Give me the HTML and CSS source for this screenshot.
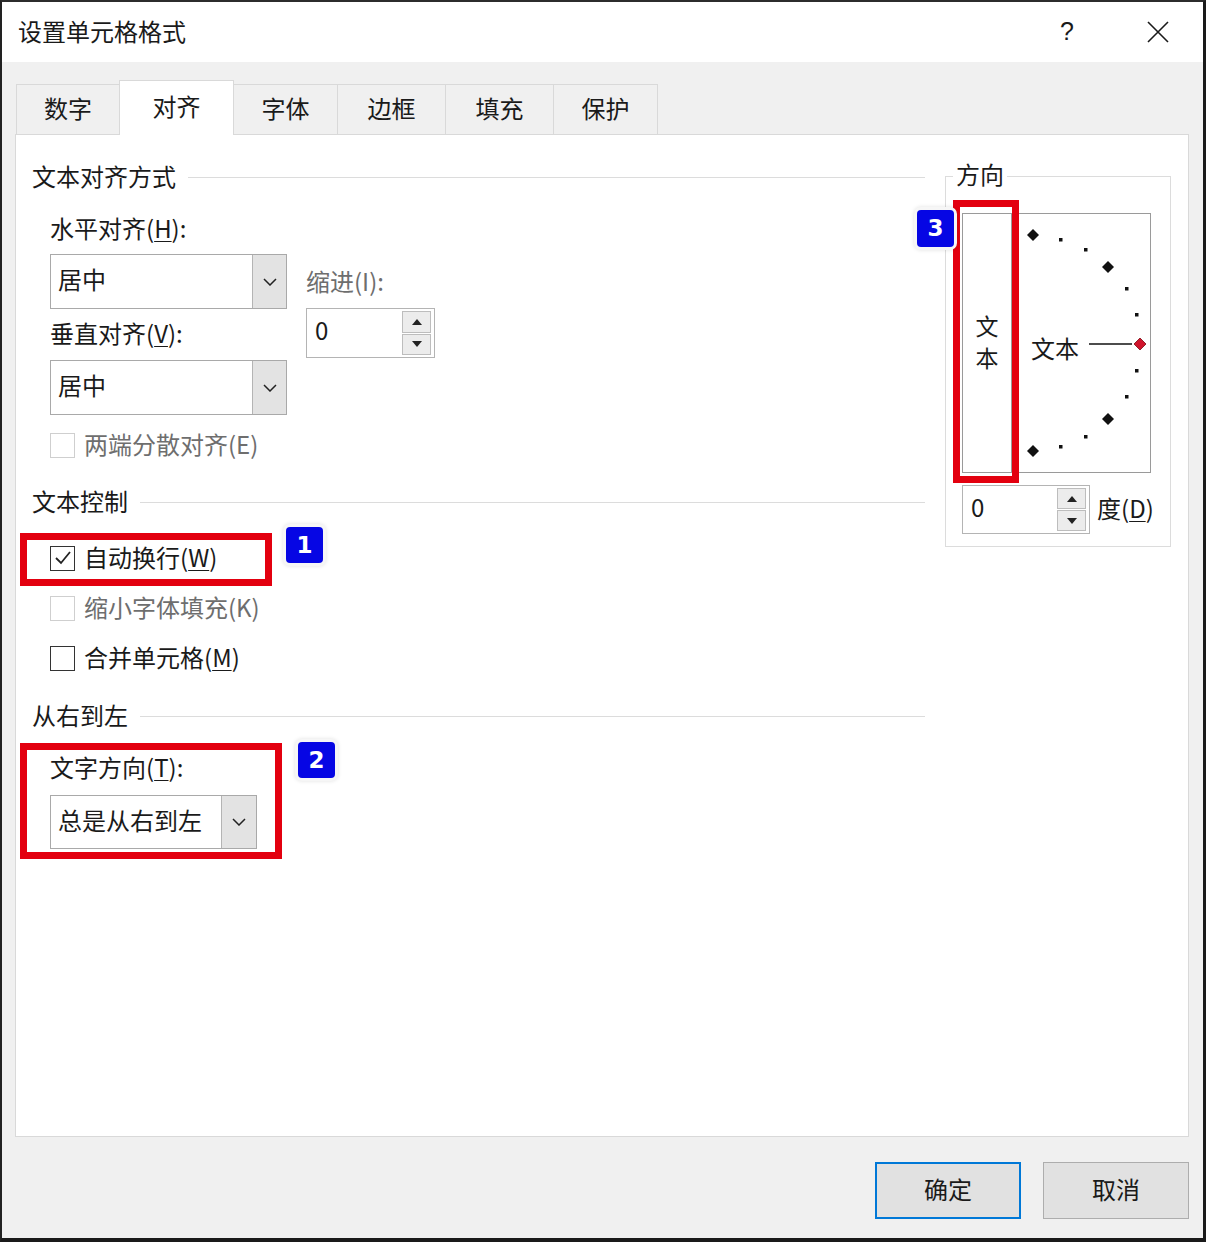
FILE: index.html
```html
<!DOCTYPE html>
<html lang="zh-CN">
<head>
  <meta charset="UTF-8">
  <meta name="viewport" content="width=device-width, initial-scale=1.0">
  <title>设置单元格格式</title>
  <link rel="stylesheet" href="styles.css">
</head>
<body>
  <div class="dialog">
    <div class="titlebar">
      <span class="title">设置单元格格式</span>
      <span class="help">?</span>
      <svg class="close" width="22" height="22" viewBox="0 0 22 22">
        <path d="M1 1 L21 21 M21 1 L1 21" stroke="#1a1a1a" stroke-width="1.6" fill="none"/>
      </svg>
    </div>

    <div class="content">
      <div class="tabs">
        <div class="tab">数字</div>
        <div class="tab active">对齐</div>
        <div class="tab">字体</div>
        <div class="tab">边框</div>
        <div class="tab">填充</div>
        <div class="tab">保护</div>
      </div>

      <div class="panel">
        <div class="left">
          <div class="sec-title"><span>文本对齐方式</span><i class="rule"></i></div>
          <div class="sec-body">
            <div class="align-row">
              <div class="align-col">
                <div class="label">水平对齐(<u>H</u>):</div>
                <div class="select">
                  <span class="select-text">居中</span>
                  <span class="drop"><svg width="14" height="8" viewBox="0 0 14 8"><path d="M1 1 L7 7 L13 1" stroke="#222" stroke-width="1.5" fill="none"/></svg></span>
                </div>
                <div class="label label-v">垂直对齐(<u>V</u>):</div>
                <div class="select select-v">
                  <span class="select-text">居中</span>
                  <span class="drop"><svg width="14" height="8" viewBox="0 0 14 8"><path d="M1 1 L7 7 L13 1" stroke="#222" stroke-width="1.5" fill="none"/></svg></span>
                </div>
              </div>
              <div class="indent-col">
                <div class="label dim">缩进(I):</div>
                <div class="spin spin-indent">
                  <span class="spin-val">0</span>
                  <span class="spin-btns">
                    <span class="spin-btn"><svg width="10" height="6" viewBox="0 0 10 6"><path d="M0 6 L5 0 L10 6 Z" fill="#222"/></svg></span>
                    <span class="spin-btn"><svg width="10" height="6" viewBox="0 0 10 6"><path d="M0 0 L5 6 L10 0 Z" fill="#222"/></svg></span>
                  </span>
                </div>
              </div>
            </div>
            <div class="check-row check-first disabled">
              <span class="box"></span><span>两端分散对齐(E)</span>
            </div>
          </div>

          <div class="sec-title sec-gap"><span>文本控制</span><i class="rule"></i></div>
          <div class="sec-body">
            <div class="check-row check-top">
              <span class="box"><svg width="22" height="22" viewBox="0 0 22 22"><path d="M4 11 L9 16 L18 5" stroke="#222" stroke-width="1.8" fill="none"/></svg></span>
              <span>自动换行(<u>W</u>)</span>
            </div>
            <div class="check-row disabled">
              <span class="box"></span><span>缩小字体填充(K)</span>
            </div>
            <div class="check-row">
              <span class="box"></span><span>合并单元格(<u>M</u>)</span>
            </div>
          </div>

          <div class="sec-title sec-gap2"><span>从右到左</span><i class="rule"></i></div>
          <div class="sec-body">
            <div class="label label-dir">文字方向(<u>T</u>):</div>
            <div class="select select-dir">
              <span class="select-text">总是从右到左</span>
              <span class="drop"><svg width="14" height="8" viewBox="0 0 14 8"><path d="M1 1 L7 7 L13 1" stroke="#222" stroke-width="1.5" fill="none"/></svg></span>
            </div>
          </div>
        </div>

        <div class="dir-group">
          <span class="legend">方向</span>
          <div class="orient">
            <div class="vtext"><span>文</span><span>本</span></div>
            <div class="dial">
              <svg width="133" height="258" viewBox="0 0 133 258">
                <g fill="#111">
                  <polygon points="14,15 20,21 14,27 8,21"/>
                  <polygon points="89,47 95,53 89,59 83,53"/>
                  <polygon points="89,199 95,205 89,211 83,205"/>
                  <polygon points="14,231 20,237 14,243 8,237"/>
                  <rect x="40" y="24" width="3.5" height="3.5"/>
                  <rect x="65" y="34" width="3.5" height="3.5"/>
                  <rect x="106" y="73" width="3.5" height="3.5"/>
                  <rect x="116" y="99" width="3.5" height="3.5"/>
                  <rect x="116" y="155" width="3.5" height="3.5"/>
                  <rect x="106" y="181" width="3.5" height="3.5"/>
                  <rect x="65" y="221" width="3.5" height="3.5"/>
                  <rect x="40" y="231" width="3.5" height="3.5"/>
                </g>
                <line x1="70" y1="130" x2="113" y2="130" stroke="#111" stroke-width="1.3"/>
                <polygon points="121,124 127,130 121,136 115,130" fill="#d0142c" stroke="#7a0a12" stroke-width="0.8"/>
                <text x="12" y="144" class="dial-text">文本</text>
              </svg>
            </div>
          </div>
          <div class="deg-row">
            <div class="spin spin-deg">
              <span class="spin-val">0</span>
              <span class="spin-btns">
                <span class="spin-btn"><svg width="10" height="6" viewBox="0 0 10 6"><path d="M0 6 L5 0 L10 6 Z" fill="#222"/></svg></span>
                <span class="spin-btn"><svg width="10" height="6" viewBox="0 0 10 6"><path d="M0 0 L5 6 L10 0 Z" fill="#222"/></svg></span>
              </span>
            </div>
            <span class="deg-label">度(<u>D</u>)</span>
          </div>
        </div>
      </div>

      <div class="footer">
        <button class="btn btn-ok">确定</button>
        <button class="btn">取消</button>
      </div>
    </div>

    <!-- annotations drawn over the dialog -->
    <div class="mark mark-1"></div>
    <div class="mark mark-2"></div>
    <div class="mark mark-3"></div>
    <div class="badge badge-1">1</div>
    <div class="badge badge-2">2</div>
    <div class="badge badge-3">3</div>
  </div>
</body>
</html>
```

FILE: styles.css
```css
* {
  box-sizing: border-box;
}
body {
  margin: 0;
  background: #1e1e1e;
  font-family: "Noto Sans CJK SC", "Noto Sans", sans-serif;
  color: #1a1a1a;
}
u {
  text-decoration-thickness: 1px;
  text-underline-offset: 3px;
}
.dialog {
  position: relative;
  width: 1206px;
  height: 1242px;
  background: #f0f0f0;
  border-left: 2px solid #222;
  border-top: 2px solid #2c2c2c;
  border-right: 3px solid #1a1a1a;
  border-bottom: 4px solid #1a1a1a;
  display: flex;
  flex-direction: column;
}
.titlebar {
  height: 60px;
  background: #fff;
  display: flex;
  align-items: center;
  padding: 0 0 4px 16px;
  font-size: 24px;
}
.title {
  flex: 1;
}
.help {
  font-family: "Liberation Sans", sans-serif;
  font-size: 25px;
  margin-right: 73px;
  margin-top: 2px;
}
.close {
  margin-right: 34px;
  margin-top: 4px;
}
.content {
  flex: 1;
  padding: 18px 14px 0 13px;
  display: flex;
  flex-direction: column;
}
.tabs {
  display: flex;
  align-items: flex-end;
  padding-left: 1px;
  height: 54px;
  position: relative;
  z-index: 1;
}
.tab {
  height: 50px;
  padding: 0 27.5px;
  font-size: 24px;
  line-height: 46px;
  border: 1px solid #d9d9d9;
  border-bottom: none;
  margin-right: -1px;
  background: #f0f0f0;
}
.tab:first-child {
  padding: 0 27px;
}
.tab:nth-child(4), .tab:nth-child(5) {
  padding: 0 29.5px;
}
.tab.active {
  height: 55px;
  background: #fff;
  padding: 0 32.5px;
  line-height: 50px;
  margin-bottom: -1px;
  position: relative;
}
.panel {
  height: 1003px;
  background: #fff;
  border: 1px solid #d9d9d9;
  display: flex;
  padding: 26px 15px 0 16px;
}
.left {
  width: 893px;
}
.sec-title {
  display: flex;
  align-items: center;
  height: 32px;
  font-size: 24px;
  line-height: 28px;
}
.sec-title span {
  margin-top: -3px;
}
.rule {
  flex: 1;
  height: 1px;
  background: #dcdcdc;
  margin-left: 12px;
}
.sec-gap {
  margin-top: 25px;
}
.sec-gap2 {
  margin-top: 26px;
}
.sec-body {
  padding-left: 18px;
}
.label {
  font-size: 24px;
  line-height: 28px;
  height: 32px;
}
.dim {
  color: #6e6e6e;
}
.align-row {
  display: flex;
  margin-top: 21px;
}
.align-col {
  width: 237px;
}
.indent-col {
  margin-left: 19px;
  margin-top: 53px;
}
.select {
  display: flex;
  width: 237px;
  height: 55px;
  border: 1px solid #a9a9a9;
  margin-top: 8px;
  background: #fff;
}
.select-text {
  flex: 1;
  font-size: 24px;
  line-height: 48px;
  padding-left: 7px;
}
.drop {
  width: 34px;
  background: #e3e3e3;
  border-left: 1px solid #b4b4b4;
  display: flex;
  align-items: center;
  justify-content: center;
}
.label-v {
  margin-top: 10px;
}
.select-v {
  margin-top: 9px;
}
.spin {
  display: flex;
  border: 1px solid #b4b4b4;
  background: #fff;
}
.spin-indent {
  width: 129px;
  height: 50px;
  margin-top: 9px;
}
.spin-val {
  flex: 1;
  font-size: 24px;
  line-height: 42px;
  padding-left: 8px;
}
.spin-btns {
  display: flex;
  flex-direction: column;
  gap: 1px;
  padding: 2px 3px 2px 0;
}
.spin-btn {
  flex: 1;
  width: 29px;
  border: 1px solid #bdbdbd;
  background: #ececec;
  display: flex;
  align-items: center;
  justify-content: center;
}
.check-row {
  display: flex;
  align-items: center;
  height: 32px;
  font-size: 24px;
  gap: 9px;
  margin-top: 18px;
}
.check-row span:last-child {
  margin-top: -4px;
}
.check-first {
  margin-top: 14px;
}
.check-top {
  margin-top: 24px;
}
.box {
  width: 25px;
  height: 25px;
  border: 1.5px solid #333;
  background: #fff;
  display: flex;
  align-items: center;
  justify-content: center;
}
.disabled {
  color: #6e6e6e;
}
.disabled .box {
  border: 1px solid #cfcfcf;
}
.label-dir {
  margin-top: 21px;
}
.select-dir {
  width: 207px;
  height: 54px;
  margin-top: 10px;
}
.select-dir .drop {
  width: 35px;
}
.dir-group {
  width: 226px;
  height: 371px;
  margin-left: 20px;
  margin-top: 15px;
  border: 1px solid #dcdcdc;
  display: flex;
  flex-direction: column;
}
.legend {
  align-self: flex-start;
  font-size: 24px;
  line-height: 28px;
  height: 32px;
  background: #fff;
  margin: -17px 0 0 7px;
  padding: 0 3px;
}
.orient {
  display: flex;
  margin: 21px 0 0 16px;
}
.vtext {
  width: 50px;
  height: 260px;
  border: 1px solid #9a9a9a;
  display: flex;
  flex-direction: column;
  align-items: center;
  justify-content: center;
  font-size: 23px;
  line-height: 32px;
  padding-bottom: 4px;
}
.dial {
  width: 133px;
  height: 260px;
  margin-left: 6px;
  border: 1px solid #9a9a9a;
}
.dial svg {
  display: block;
}
.dial-text {
  font-family: "Noto Sans CJK SC", sans-serif;
  font-size: 24px;
  fill: #1a1a1a;
}
.deg-row {
  display: flex;
  align-items: center;
  margin: 12px 0 0 16px;
}
.spin-deg {
  width: 128px;
  height: 49px;
}
.deg-label {
  font-size: 24px;
  margin-left: 7px;
  margin-top: -4px;
}
.footer {
  display: flex;
  justify-content: flex-end;
  gap: 22px;
  padding-top: 25px;
}
.btn {
  width: 146px;
  height: 57px;
  background: #e1e1e1;
  border: 1px solid #adadad;
  font-family: "Noto Sans CJK SC", sans-serif;
  font-size: 24px;
  line-height: 1;
  color: #1a1a1a;
  padding: 0 0 4px;
}
.btn-ok {
  border: 2px solid #0078d7;
}
.mark {
  position: absolute;
  border: 7px solid #e3000f;
}
.mark-1 {
  left: 18px;
  top: 531px;
  width: 252px;
  height: 53px;
}
.mark-2 {
  left: 18px;
  top: 741px;
  width: 262px;
  height: 116px;
}
.mark-3 {
  left: 951px;
  top: 198px;
  width: 66px;
  height: 283px;
}
.badge {
  position: absolute;
  width: 37px;
  height: 36px;
  background: #0606e4;
  border-radius: 4px;
  color: #fff;
  font-family: "DejaVu Sans", sans-serif;
  font-weight: bold;
  font-size: 23px;
  line-height: 36px;
  text-align: center;
  box-shadow: 0 0 0 3px #f6f6f6, 0 0 4px 3px rgba(0, 0, 0, 0.12);
}
.badge-1 {
  left: 284px;
  top: 525px;
}
.badge-2 {
  left: 296px;
  top: 740px;
}
.badge-3 {
  left: 915px;
  top: 208px;
  height: 37px;
}
```
